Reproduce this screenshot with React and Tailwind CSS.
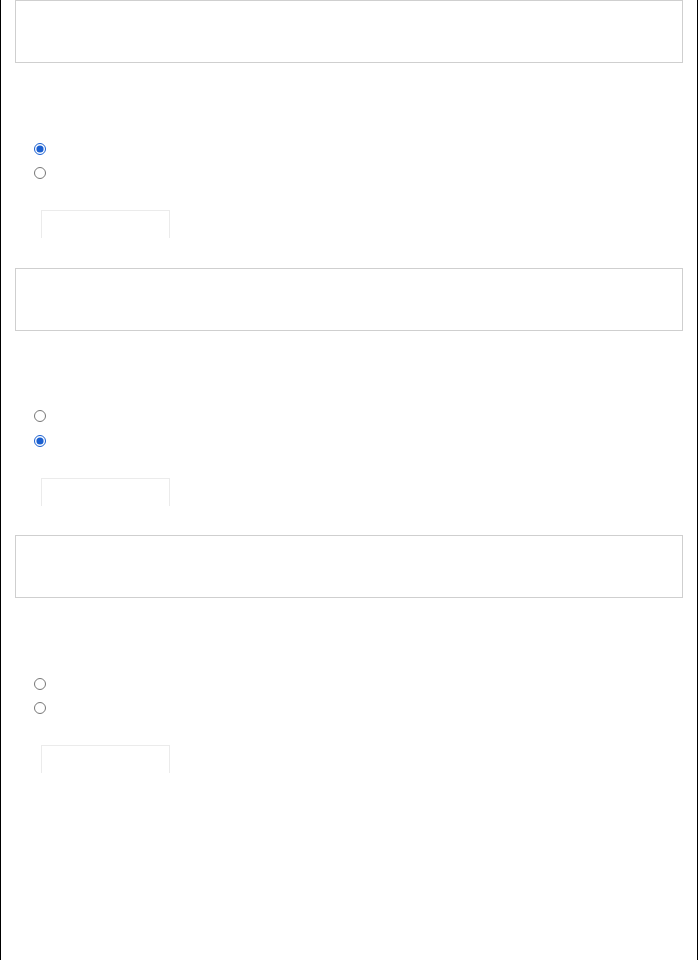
import React from 'react';

const sections = [
  { id: 'q1', checked: 0 },
  { id: 'q2', checked: 1 },
  { id: 'q3', checked: -1 },
];

function Section({ id, checked }) {
  return (
    <div className="pb-[29.5px]">
      <div className="mx-[14px] h-[63px] border border-[#cfcfcf] bg-white" />
      <div className="flex flex-col gap-[12.5px] pl-[33px] pt-[79.5px]">
        {[0, 1].map((i) => (
          <input
            key={i}
            type="radio"
            name={id}
            defaultChecked={checked === i}
            className="m-0 block h-[12px] w-[12px] accent-[#1a5fd0]"
          />
        ))}
      </div>
      <div className="ml-[40px] mt-[31px] h-[28px] w-[129px] border-x border-t border-[#ebebeb]" />
    </div>
  );
}

export default function App() {
  return (
    <div className="min-h-[960px] border-x border-black bg-white font-['Liberation_Sans',sans-serif]">
      {sections.map((s) => (
        <Section key={s.id} {...s} />
      ))}
    </div>
  );
}
